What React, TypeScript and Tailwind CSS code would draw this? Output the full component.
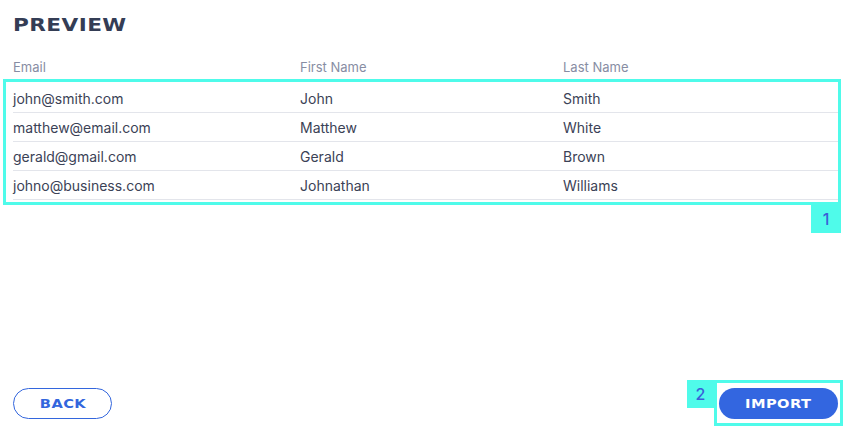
import React from "react";

const rows = [
  { email: "john@smith.com", first: "John", last: "Smith" },
  { email: "matthew@email.com", first: "Matthew", last: "White" },
  { email: "gerald@gmail.com", first: "Gerald", last: "Brown" },
  { email: "johno@business.com", first: "Johnathan", last: "Williams" },
];

const App = () => {
  return (
    <div className="w-[849px] h-[436px] bg-white flex flex-col font-['Inter',sans-serif] text-[#3b4256] overflow-hidden">
      <h1 className="pl-[13px] pt-[14px] text-[18px] leading-[22px] font-black tracking-[0.02em] text-[#343d55] font-['DejaVu_Sans',sans-serif]">
        <span className="inline-block scale-x-[1.2] origin-left">PREVIEW</span>
      </h1>

      <div className="mt-[23px] pl-[13px] grid grid-cols-[287px_263px_1fr] text-[13px] leading-[16px] text-[#878da3]">
        <span>Email</span>
        <span>First Name</span>
        <span>Last Name</span>
      </div>

      <div className="ml-[3px] mr-[8px] mt-[4px] border-[3px] border-[#4ffbea] pl-[7px] pt-[2px]">
        {rows.map((r) => (
          <div
            key={r.email}
            className="grid grid-cols-[287px_263px_1fr] h-[29px] items-center border-b border-[#e3e5eb] text-[14px]"
          >
            <span>{r.email}</span>
            <span>{r.first}</span>
            <span>{r.last}</span>
          </div>
        ))}
        <div className="h-[2px]" />
      </div>
      <div className="flex justify-end mr-[8px]">
        <span className="w-[30px] h-[28px] bg-[#4ffbea] text-[#3a5fd8] text-[16px] font-medium flex items-center justify-center">
          1
        </span>
      </div>

      <div className="mt-auto mb-[10px] flex items-end justify-between pl-[13px] pr-[6px]">
        <button className="mb-[7px] w-[99px] h-[31px] rounded-full border border-[#3366dd] text-[#3366dd] text-[12px] font-black tracking-[0.03em] font-['DejaVu_Sans',sans-serif]">
          <span className="inline-block scale-x-[1.22]">BACK</span>
        </button>
        <div className="flex items-start">
          <span className="w-[27px] h-[28px] bg-[#4ffbea] text-[#3a5fd8] text-[16px] font-medium flex items-center justify-center">
            2
          </span>
          <div className="border-[3px] border-[#4ffbea] pt-[5px] pb-[4px] px-[2px]">
            <button className="w-[119px] h-[31px] rounded-full bg-[#3366e0] text-white text-[12px] font-black tracking-[0.03em] font-['DejaVu_Sans',sans-serif]">
              <span className="inline-block scale-x-[1.22]">IMPORT</span>
            </button>
          </div>
        </div>
      </div>
    </div>
  );
};

export default App;
